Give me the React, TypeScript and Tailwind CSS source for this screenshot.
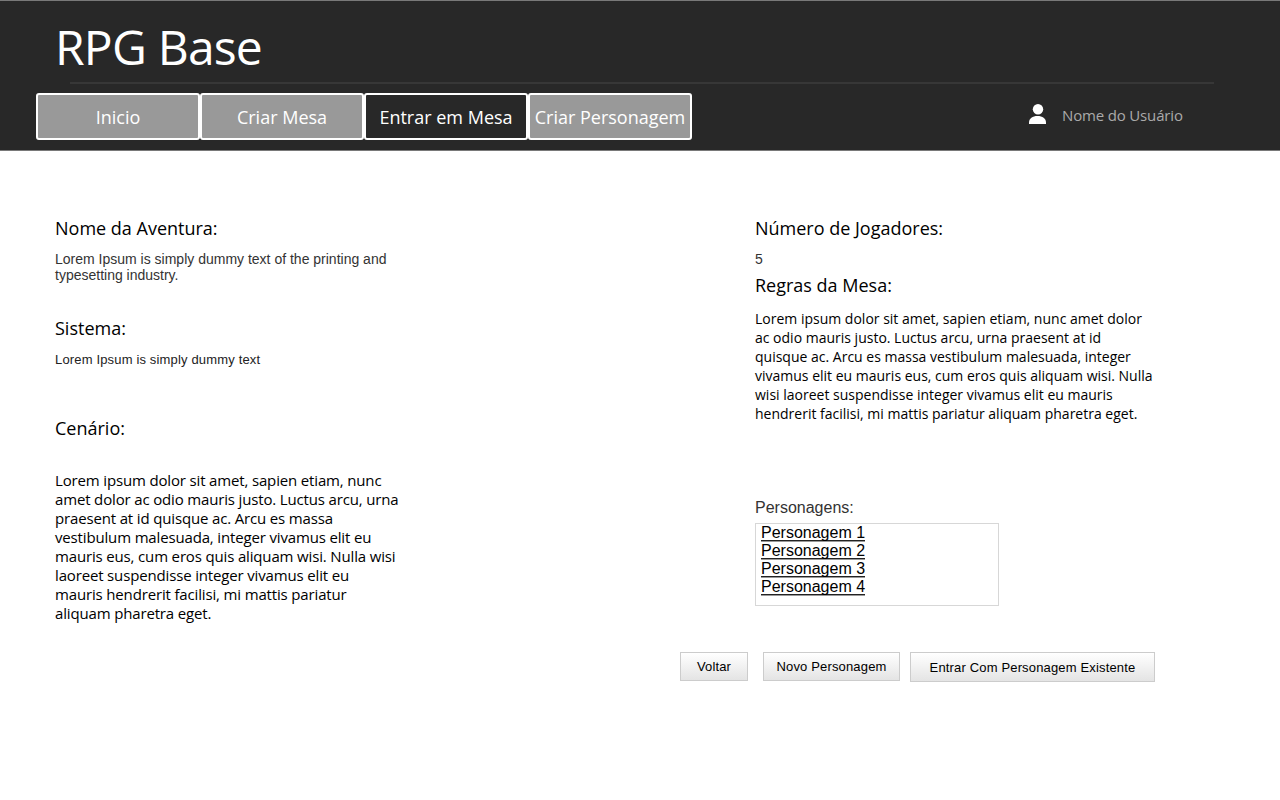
import type { ReactNode } from "react";

const tabs = [
  { label: "Inicio", active: false },
  { label: "Criar Mesa", active: false },
  { label: "Entrar em Mesa", active: true },
  { label: "Criar Personagem", active: false },
];

const characters = ["Personagem 1", "Personagem 2", "Personagem 3", "Personagem 4"];

const scenario = [
  "Lorem ipsum dolor sit amet, sapien etiam, nunc",
  "amet dolor ac odio mauris justo. Luctus arcu, urna",
  "praesent at id quisque ac. Arcu es massa",
  "vestibulum malesuada, integer vivamus elit eu",
  "mauris eus, cum eros quis aliquam wisi. Nulla wisi",
  "laoreet suspendisse integer vivamus elit eu",
  "mauris hendrerit facilisi, mi mattis pariatur",
  "aliquam pharetra eget.",
];

const rules = [
  "Lorem ipsum dolor sit amet, sapien etiam, nunc amet dolor",
  "ac odio mauris justo. Luctus arcu, urna praesent at id",
  "quisque ac. Arcu es massa vestibulum malesuada, integer",
  "vivamus elit eu mauris eus, cum eros quis aliquam wisi. Nulla",
  "wisi laoreet suspendisse integer vivamus elit eu mauris",
  "hendrerit facilisi, mi mattis pariatur aliquam pharetra eget.",
];

function Heading({ children }: { children: ReactNode }) {
  return <h2 className="h-[25px] text-lg leading-[25px] whitespace-nowrap">{children}</h2>;
}

function Lines({ lines, className }: { lines: string[]; className: string }) {
  return (
    <div className={className}>
      {lines.map((line) => (
        <p key={line} className="whitespace-nowrap">{line}</p>
      ))}
    </div>
  );
}

function Button({ children, className }: { children: ReactNode; className: string }) {
  return (
    <button
      className={`border border-[#cccccc] bg-linear-to-b from-white to-[#e4e4e4] text-center font-['Liberation_Sans',sans-serif] text-[13px] tracking-[0.16px] whitespace-nowrap text-black ${className}`}
    >
      {children}
    </button>
  );
}

export default function App() {
  return (
    <div className="h-[800px] w-[1280px] overflow-hidden bg-white font-['Open_Sans',sans-serif] text-black">
      <header className="h-[151px] border-y border-[#797979] bg-[#282828]">
        <h1 className="ml-[55px] h-[81px] pt-[13px] text-5xl leading-[65px] tracking-[-0.8px] text-white">RPG Base</h1>
        <hr className="ml-[70px] w-[1144px] border-t-2 border-[#373737]" />
        <div className="mt-[9px] flex">
          <nav className="ml-9 flex">
            {tabs.map((tab) => (
              <a
                key={tab.label}
                className={`flex h-[47px] w-[164px] items-center justify-center rounded-[3px] border-2 border-white text-lg whitespace-nowrap text-white ${
                  tab.active ? "bg-[#282828]" : "bg-[#999999]"
                }`}
              >
                {tab.label}
              </a>
            ))}
          </nav>
          <div className="ml-[337px] flex pt-[11px]">
            <svg width="17" height="20" viewBox="0 0 17 20" fill="white">
              <circle cx="9" cy="5.3" r="5.2" />
              <path d="M0 20v-1.5C0 14.5 3.5 12 8.5 12S17 14.5 17 18.500V20z" />
            </svg>
            <span className="ml-4 text-[15px] leading-[23px] tracking-[-0.16px] text-[#aaaaaa]">
              Nome do Usuário
            </span>
          </div>
        </div>
      </header>

      <main className="flex h-[501px] pt-[65px] pl-[55px]">
        <section className="w-[700px]">
          <Heading>Nome da Aventura:</Heading>
          <Lines
            lines={["Lorem Ipsum is simply dummy text of the printing and", "typesetting industry."]}
            className="mt-[10px] h-[65px] font-['Liberation_Sans',sans-serif] text-sm leading-4 text-[#333333]"
          />
          <Heading>Sistema:</Heading>
          <p className="mt-[11px] h-16 font-['Liberation_Sans',sans-serif] text-[13px] leading-[15px] tracking-[0.16px] text-[#222222]">
            Lorem Ipsum is simply dummy text
          </p>
          <Heading>Cenário:</Heading>
          <Lines lines={scenario} className="mt-[30px] text-[15px] leading-[19px] tracking-[-0.155px]" />
        </section>

        <section>
          <Heading>Número de Jogadores:</Heading>
          <p className="mt-[10px] h-[22px] font-['Liberation_Sans',sans-serif] text-sm leading-4 text-[#333333]">5</p>
          <Heading>Regras da Mesa:</Heading>
          <Lines lines={rules} className="mt-[11px] text-sm leading-[19px]" />
          <div className="mt-[76px] font-['Liberation_Sans',sans-serif] text-base leading-[18px]">
            <h3 className="text-[#333333]">Personagens:</h3>
            <ul className="mt-[6px] h-[83px] w-[244px] border border-[#d7d7d7] pl-[5px]">
              {characters.map((name) => (
                <li key={name} className="flex h-[18px]">
                  <a className="h-[18px] shadow-[inset_0_-1px_0_#999999,inset_0_-2px_0_#222222]">
                    {name}
                  </a>
                </li>
              ))}
            </ul>
          </div>
        </section>
      </main>

      <footer className="ml-[680px] flex">
        <Button className="h-[29px] w-[68px]">Voltar</Button>
        <Button className="ml-[15px] h-[29px] w-[137px]">Novo Personagem</Button>
        <Button className="ml-[10px] h-[30px] w-[245px] pt-px">Entrar Com Personagem Existente</Button>
      </footer>
    </div>
  );
}
